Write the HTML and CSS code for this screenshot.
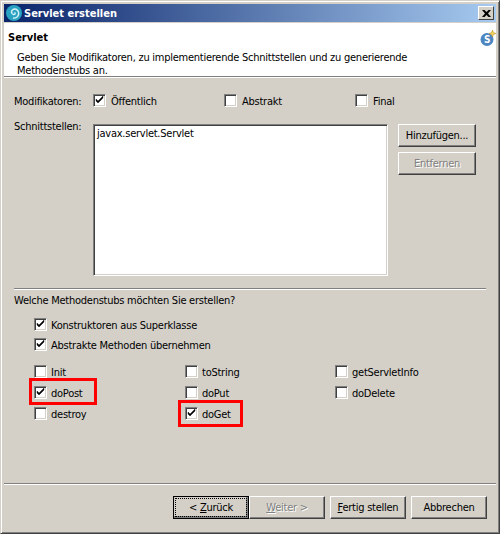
FILE: index.html
```html
<!DOCTYPE html>
<html lang="de">
<head>
  <meta charset="UTF-8">
  <title>Servlet erstellen</title>
  <link rel="stylesheet" href="styles.css">
</head>
<body>
  <div class="window">
    <div class="titlebar">
      <svg class="app-icon" width="16" height="16" viewBox="0 0 16 16">
        <circle cx="8" cy="8" r="8" fill="#2aa3c2"/>
        <path d="M8.500 7.500a1 1 0 0 1 .5 1.500 2 2 0 0 1-3-.5 3 3 0 0 1 1-4 4 4 0 0 1 5 1.500 5 5 0 0 1-1 6 5 5 0 0 1-4 1" fill="none" stroke="#d6f1f7" stroke-width="1.400"/>
      </svg>
      <span class="title">Servlet erstellen</span>
      <span class="close">
        <svg width="9" height="7" viewBox="0 0 9 7"><path d="M0 0h2.500l2 2 2-2H9L6 3.500 9 7H6.500l-2-2-2 2H0l3-3.500z"/></svg>
      </span>
    </div>

    <div class="banner">
      <div class="banner-text">
        <h1>Servlet</h1>
        <p>Geben Sie Modifikatoren, zu implementierende Schnittstellen und zu generierende<br>Methodenstubs an.</p>
      </div>
      <svg class="banner-icon" width="16" height="16" viewBox="0 0 16 16">
        <circle cx="7" cy="9.500" r="6.500" fill="#4d86c0"/>
        <text x="7" y="13" class="banner-s">S</text>
        <path d="M12.500 0l1 2.500 2.500 1-2.500 1-1 2.500-1-2.500-2.500-1 2.500-1z" fill="#f2d35c" stroke="#b08a20" stroke-width=".5"/>
      </svg>
    </div>

    <div class="content">
      <div class="mod-row">
        <span class="field-label">Modifikatoren:</span>
        <label class="check is-on">Öffentlich</label>
        <label class="check">Abstrakt</label>
        <label class="check">Final</label>
      </div>

      <div class="iface-row">
        <span class="field-label">Schnittstellen:</span>
        <div class="listbox">javax.servlet.Servlet</div>
        <div class="iface-buttons">
          <button class="btn btn-side">Hinzufügen...</button>
          <button class="btn btn-side" disabled>Entfernen</button>
        </div>
      </div>

      <hr class="sep">

      <p class="question">Welche Methodenstubs möchten Sie erstellen?</p>

      <div class="stubs">
        <label class="check is-on">Konstruktoren aus Superklasse</label>
        <label class="check is-on">Abstrakte Methoden übernehmen</label>
      </div>

      <div class="methods">
        <label class="check">Init</label>
        <label class="check">toString</label>
        <label class="check">getServletInfo</label>
        <label class="check is-on marked mark-post">doPost</label>
        <label class="check">doPut</label>
        <label class="check">doDelete</label>
        <label class="check">destroy</label>
        <label class="check is-on marked mark-get">doGet</label>
      </div>
    </div>

    <div class="footer">
      <button class="btn btn-nav is-default"><span class="focus">&lt; <u>Z</u>urück</span></button>
      <button class="btn btn-nav" disabled><span><u>W</u>eiter &gt;</span></button>
      <button class="btn btn-nav gap-left"><span><u>F</u>ertig stellen</span></button>
      <button class="btn btn-nav gap-left"><span>Abbrechen</span></button>
    </div>
  </div>
</body>
</html>
```

FILE: styles.css
```css
*, *::before, *::after { margin: 0; padding: 0; box-sizing: border-box; }
html, body { width: 500px; height: 534px; overflow: hidden; }
body {
  font-family: "DejaVu Sans Condensed", "Liberation Sans", Arial, sans-serif;
  font-size: 11px;
  letter-spacing: -.25px;
  color: #000;
  background: #d4d0c8;
}

/* Ventana */
.window {
  width: 500px;
  height: 534px;
  padding: 3px;
  display: flex;
  flex-direction: column;
  background: #d4d0c8;
  border: 1px solid;
  border-color: #d4d0c8 #404040 #404040 #d4d0c8;
  box-shadow: inset 1px 1px 0 #fff, inset -1px -1px 0 #808080;
}

.titlebar {
  height: 18px;
  flex: none;
  display: flex;
  align-items: center;
  padding: 0 2px;
  background: linear-gradient(to right, #0a246a, #a6caf0);
  color: #fff;
}
.app-icon { flex: none; margin-right: 2px; }
.title { flex: 1; font-size: 11px; font-weight: bold; letter-spacing: 0; }
.close {
  width: 16px;
  height: 14px;
  display: flex;
  align-items: center;
  justify-content: center;
  background: #d4d0c8;
  border: 1px solid;
  border-color: #fff #404040 #404040 #fff;
}

/* Cabecera blanca */
.banner {
  height: 54px;
  flex: none;
  margin-top: 1px;
  display: flex;
  justify-content: space-between;
  background: #fff;
  border-bottom: 1px solid #808080;
  box-shadow: 0 1px 0 #fff;
}
.banner-text { width: 440px; }
.banner h1 { font-size: 11px; font-weight: bold; margin: 8px 0 0 4px; letter-spacing: 0; }
.banner p { margin: 7px 0 0 13px; line-height: 13px; white-space: nowrap; }
.banner-icon { margin: 7px 0 0; }
.banner-s { font-size: 10px; font-weight: bold; fill: #fff; text-anchor: middle; }

/* Contenido */
.content { flex: 1; padding: 0 10px; }
.field-label { width: 79px; flex: none; line-height: 15px; }

.check {
  display: flex;
  align-items: flex-start;
  gap: 5px;
  height: 13px;
  line-height: 15px;
  position: relative;
}
.check::before {
  content: "";
  width: 13px;
  height: 13px;
  flex: none;
  background: #fff;
  border: 1px solid;
  border-color: #808080 #fff #fff #808080;
  box-shadow: inset 1px 1px 0 #404040, inset -1px -1px 0 #d4d0c8;
}
.is-on::before {
  background:
    url("data:image/svg+xml,%3Csvg xmlns='http://www.w3.org/2000/svg' width='13' height='13'%3E%3Cpath d='M3 5v2l2 2 5-5V2L5 7z' fill='%23000' stroke='%23000' stroke-width='.4'/%3E%3C/svg%3E") -1px -1px no-repeat,
    #fff;
}

.mod-row { display: flex; align-items: flex-start; margin-top: 17px; height: 13px; }
.mod-row .check { width: 131px; }
.iface-row { display: flex; margin-top: 17px; }
.iface-row .field-label { margin-top: -5px; }
.listbox {
  width: 295px;
  height: 152px;
  flex: none;
  padding: 2px 3px;
  background: #fff;
  border: 1px solid;
  border-color: #808080 #fff #fff #808080;
  box-shadow: inset 1px 1px 0 #404040, inset -1px -1px 0 #d4d0c8;
}
.iface-buttons {
  display: flex;
  flex-direction: column;
  gap: 5px;
  margin-left: 10px;
}

.btn {
  font: inherit;
  letter-spacing: inherit;
  color: #000;
  background: #d4d0c8;
  border: 1px solid;
  border-color: #fff #404040 #404040 #fff;
  box-shadow: inset -1px -1px 0 #808080;
  height: 23px;
}
.btn:disabled { color: #808080; text-shadow: 1px 1px 0 #fff; }
.btn-side { width: 78px; }

.sep {
  margin-top: 12px;
  border: 0;
  border-top: 1px solid #808080;
  border-bottom: 1px solid #fff;
}
.question { margin-top: 4px; height: 14px; line-height: 14px; }

.stubs {
  display: flex;
  flex-direction: column;
  gap: 7px;
  margin: 10px 0 0 20px;
}
.stubs .check, .methods .check { gap: 4px; }
.methods {
  display: grid;
  grid-template-columns: 151px 150px 1fr;
  grid-auto-rows: 13px;
  row-gap: 8px;
  margin: 14px 0 0 20px;
}

/* Recuadros rojos */
.marked::after {
  content: "";
  position: absolute;
  border: 3px solid #f00;
}
.mark-post::after { left: -5px; top: -8px; width: 68px; height: 27px; }
.mark-get::after { left: -7px; top: -7px; width: 65px; height: 27px; }

/* Botonera */
.footer {
  height: 47px;
  flex: none;
  display: flex;
  padding: 12px 9px 0 169px;
  border-top: 1px solid #808080;
  box-shadow: inset 0 1px 0 #fff;
}
.btn-nav { width: 76px; padding: 2px; }
.btn-nav span { display: block; }
.gap-left { margin-left: 5px; }
.is-default { outline: 1px solid #000; outline-offset: -1px; box-shadow: inset -2px -2px 0 #808080; }
.focus { outline: 1px dotted #000; outline-offset: 0; padding: 2px 0; }
```
